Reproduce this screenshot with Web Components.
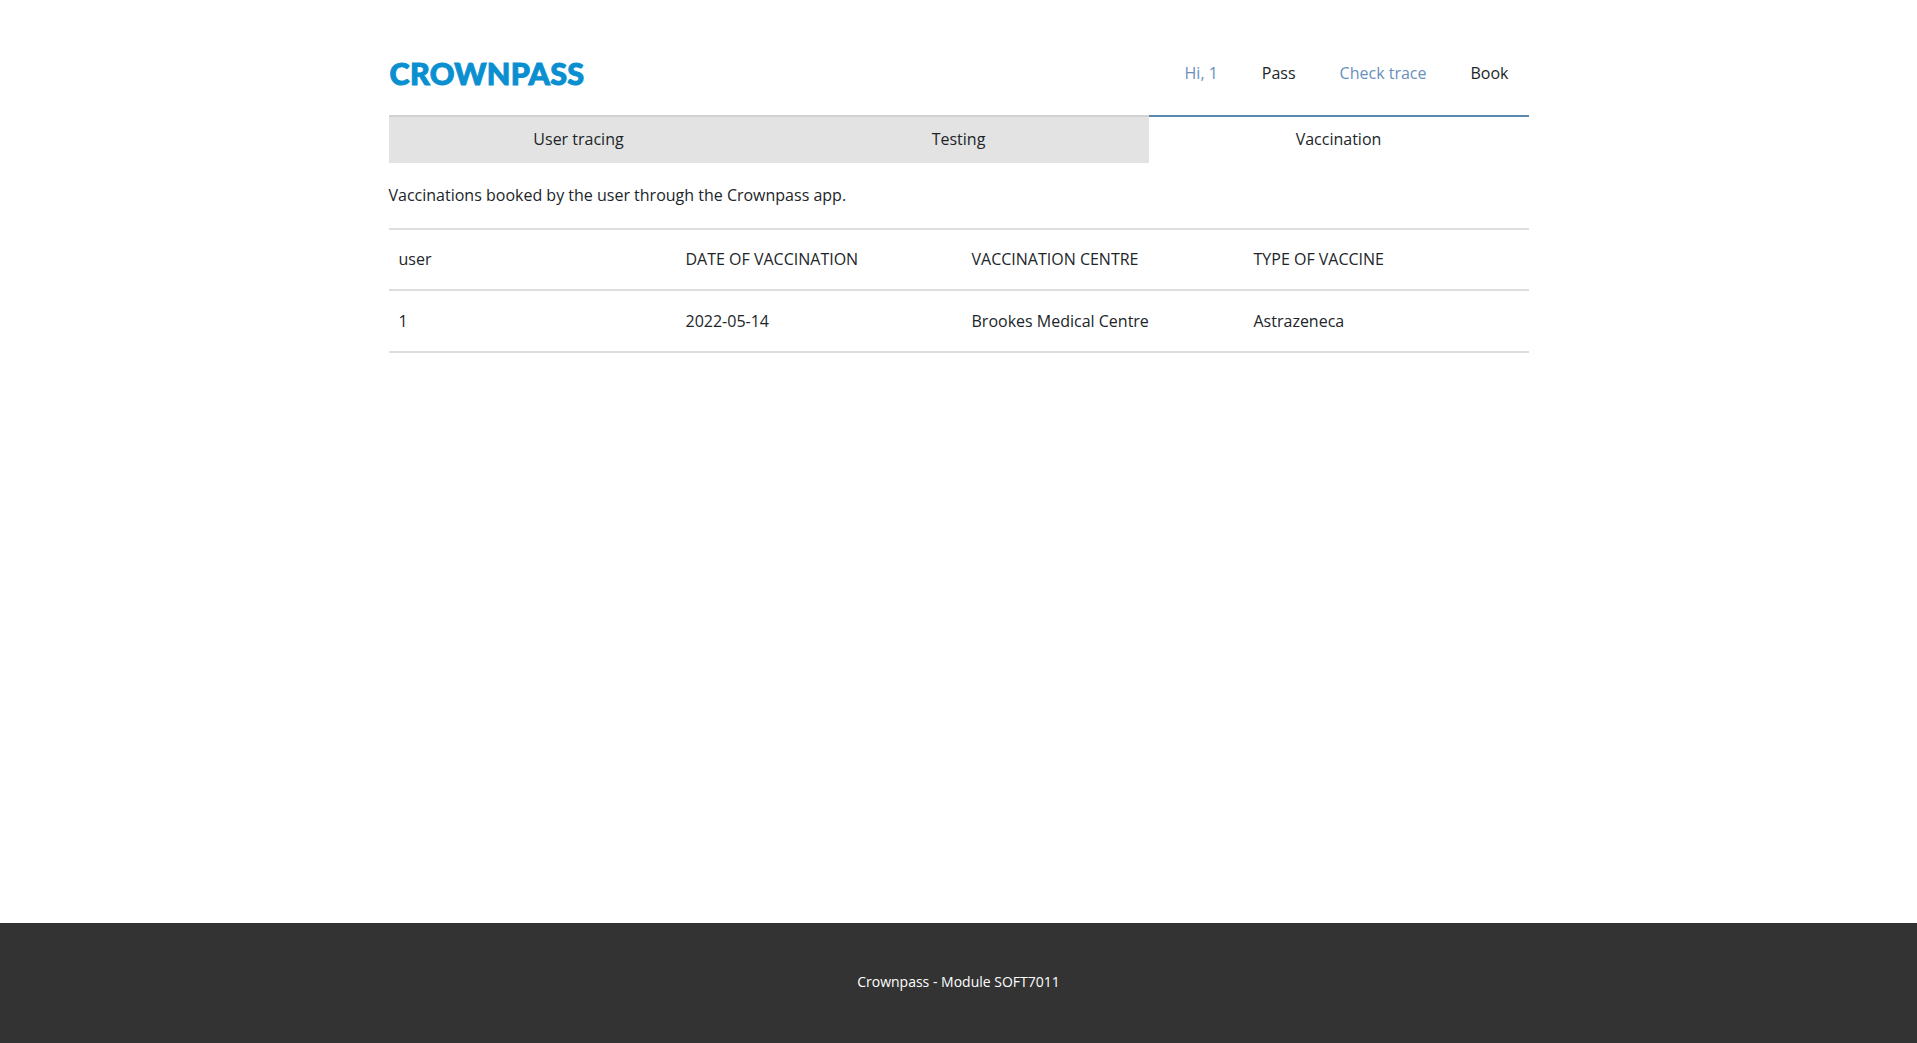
<!DOCTYPE html>
<html lang="en">
<head>
<meta charset="utf-8">
<title>Crownpass</title>
<style>
html, body { margin: 0; padding: 0; height: 100%; }
body { display: flex; flex-direction: column; font-family: "Open Sans", sans-serif; font-size: 16px; color: #212529; background: #fff; }
</style>
</head>
<body>
<crown-page>
    <crown-header></crown-header>
    <crown-tabs></crown-tabs>
    <crown-intro>Vaccinations booked by the user through the Crownpass app.</crown-intro>
    <crown-table></crown-table>
</crown-page>
<crown-footer>Crownpass - Module SOFT7011</crown-footer>

<script>
class CrownPage extends HTMLElement {
    constructor(){
        super();
        this.attachShadow({mode: 'open'});
        this.shadowRoot.innerHTML = `
        <style>
        :host{ display: block; flex: none; height: 923px; box-sizing: border-box; }
        .wrap{ width: 1140px; margin: 0 auto; }
        </style>
        <div class="wrap"><slot></slot></div>`;
    }
}
customElements.define('crown-page', CrownPage);

class CrownHeader extends HTMLElement {
    constructor(){
        super();
        this.attachShadow({mode: 'open'});
        this.shadowRoot.innerHTML = `
        <style>
        :host{ display: flex; height: 115px; align-items: center; justify-content: space-between; padding-top: 31px; box-sizing: border-box; }
        .logo{ font-family: "Lato", sans-serif; font-weight: 900; font-size: 30.5px; line-height: 30px; letter-spacing: 0.3px; color: #0a8fd0; -webkit-text-stroke: 1px #0a8fd0; padding-left: 1px; }
        nav{ display: flex; gap: 44px; padding-right: 20px; }
        a{ color: #212529; text-decoration: none; line-height: 24px; }
        a.on{ color: #6a8fbb; }
        </style>
        <div class="logo">CROWNPASS</div>
        <nav>
            <a class="on" href="#">Hi, 1</a>
            <a href="#">Pass</a>
            <a class="on" href="#">Check trace</a>
            <a href="#">Book</a>
        </nav>`;
    }
}
customElements.define('crown-header', CrownHeader);

class CrownTabs extends HTMLElement {
    constructor(){
        super();
        this.attachShadow({mode: 'open'});
        this.shadowRoot.innerHTML = `
        <style>
        :host{ display: grid; grid-template-columns: repeat(3, 380px); height: 48px; }
        div{ display: flex; align-items: center; justify-content: center; background: #e3e3e3; border-top: 2px solid #d2d2d2; padding-bottom: 2px; box-sizing: border-box; }
        div.active{ background: #fff; border-top-color: #5b89ad; }
        </style>
        <div>User tracing</div>
        <div>Testing</div>
        <div class="active">Vaccination</div>`;
    }
}
customElements.define('crown-tabs', CrownTabs);

class CrownIntro extends HTMLElement {
    constructor(){
        super();
        this.attachShadow({mode: 'open'});
        this.shadowRoot.innerHTML = `
        <style>
        :host{ display: block; padding-top: 20px; height: 65px; box-sizing: border-box; line-height: 24px; }
        </style>
        <slot></slot>`;
    }
}
customElements.define('crown-intro', CrownIntro);

class CrownTable extends HTMLElement {
    constructor(){
        super();
        this.attachShadow({mode: 'open'});
        this.shadowRoot.innerHTML = `
        <style>
        :host{ display: block; border-top: 2px solid #dedede; }
        .row{ display: grid; grid-template-columns: 287px 286px 282px 285px; align-items: center; border-bottom: 2px solid #dedede; box-sizing: border-box; }
        .row.h{ height: 61px; padding-bottom: 1px; }
        .row.b{ height: 62px; }
        .row span{ padding-left: 10px; line-height: 24px; }
        </style>
        <div class="row h"><span>user</span><span>DATE OF VACCINATION</span><span>VACCINATION CENTRE</span><span>TYPE OF VACCINE</span></div>
        <div class="row b"><span>1</span><span>2022-05-14</span><span>Brookes Medical Centre</span><span>Astrazeneca</span></div>`;
    }
}
customElements.define('crown-table', CrownTable);

class CrownFooter extends HTMLElement {
    constructor(){
        super();
        this.attachShadow({mode: 'open'});
        this.shadowRoot.innerHTML = `
        <style>
        :host{ display: flex; flex: 1; min-height: 120px; background: #333; color: #fff; font-size: 14px; justify-content: center; padding-top: 48px; line-height: 22px; box-sizing: border-box; }
        </style>
        <slot></slot>`;
    }
}
customElements.define('crown-footer', CrownFooter);
</script>
</body>
</html>
